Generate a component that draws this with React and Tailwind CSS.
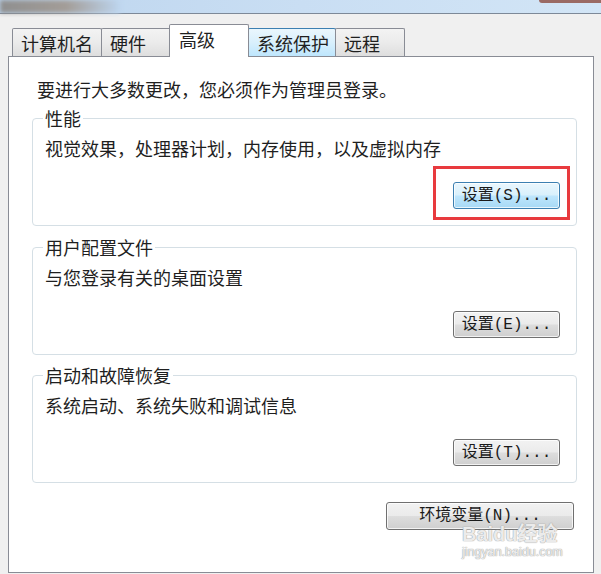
import React from "react";

const cjk = "font-['Noto_Sans_CJK_SC','Liberation_Sans',sans-serif]";

const WinButton = ({ label, focused = false, className = "" }) => (
  <button
    className={`flex items-center justify-center rounded-[3px] border text-[16px] leading-none text-[#1a1a1a] font-['Liberation_Mono','Noto_Sans_CJK_SC',monospace] shadow-[inset_0_0_0_1px_rgba(255,255,255,0.75)] ${
      focused
        ? "border-[#3c7fb1] bg-[linear-gradient(#eaf6fd,#d9f0fc_48%,#bee6fd_52%,#a7d9f5)]"
        : "border-[#707070] bg-[linear-gradient(#f2f2f2,#ebebeb_48%,#dddddd_52%,#cfcfcf)]"
    } ${className}`}
  >
    {label}
  </button>
);

const GroupBox = ({ title, text, button, focused, marked }) => (
  <div className="relative h-[108px] rounded-[4px] border border-[#d5dfe5] pl-[12px] pt-[17px]">
    <span className="absolute -top-[13px] left-[10px] bg-white px-[2px] text-[18px] leading-[24px]">
      {title}
    </span>
    <div className="text-[18px] leading-[24px]">{text}</div>
    <div className="mt-[22px] flex justify-end pr-[16px]">
      <WinButton label={button} focused={focused} className="h-[27px] w-[107px]" />
    </div>
    {marked && (
      <div className="absolute right-[6px] top-[47px] h-[54px] w-[137px] border-[3px] border-[#e83a3e]" />
    )}
  </div>
);

const tabs = [
  { label: "计算机名", w: "w-[90px]" },
  { label: "硬件", w: "w-[70px]" },
  { label: "高级", w: "w-[80px]", active: true },
  { label: "系统保护", w: "w-[88px]", hover: true },
  { label: "远程", w: "w-[70px]" },
];

export default function App() {
  return (
    <div className={`relative h-[574px] w-[601px] overflow-hidden bg-[#f0f0f0] text-[#1f1f1f] ${cjk}`}>
      {/* blurred title bar */}
      <div className="flex h-[14px] border-b border-[#7d8998] bg-[linear-gradient(90deg,#bdd5ee,#c9def3_50%,#d2e5f6)]">
        <div className="h-full w-[120px] bg-[linear-gradient(90deg,#8f8f8f,#a39d98_55%,#bdd5ee)] blur-[2px]" />
        <div className="flex-1" />
        <div className="h-[3px] w-[62px] rounded-bl-[3px] bg-[#9a6a64]" />
      </div>

      <div className="pl-[8px] pr-[7px] pt-[10px]">
        {/* tabs */}
        <div className="flex h-[32px] items-end pl-[4px]">
          {tabs.map((t) =>
            t.active ? (
              <div
                key={t.label}
                className={`relative z-10 -mb-px -ml-[2px] h-[33px] ${t.w} rounded-t-[2px] border border-b-0 border-[#898c95] bg-white pl-[9px] pt-[2px] text-[18px] leading-[24px]`}
              >
                {t.label}
              </div>
            ) : (
              <div
                key={t.label}
                className={`-ml-px h-[28px] first:ml-0 ${t.w} rounded-t-[2px] border border-b-0 ${
                  t.hover
                    ? "border-[#3c7fb1] bg-[linear-gradient(#eaf6fd,#d9f0fc_50%,#bee6fd)]"
                    : "border-[#898c95] bg-[linear-gradient(#f3f3f3,#ebebeb_50%,#dedede)]"
                } pl-[8px] pt-[2px] text-[18px] leading-[24px]`}
              >
                {t.label}
              </div>
            )
          )}
        </div>

        {/* panel */}
        <div className="h-[517px] border border-[#898c95] bg-white pl-[23px] pr-[16px] pt-[20px]">
          <div className="pl-[5px] text-[18px] leading-[24px]">
            要进行大多数更改，您必须作为管理员登录。
          </div>
          <div className="mt-[17px]">
            <GroupBox
              title="性能"
              text="视觉效果，处理器计划，内存使用，以及虚拟内存"
              button="设置(S)..."
              focused
              marked
            />
          </div>
          <div className="mt-[21px]">
            <GroupBox title="用户配置文件" text="与您登录有关的桌面设置" button="设置(E)..." />
          </div>
          <div className="mt-[20px]">
            <GroupBox title="启动和故障恢复" text="系统启动、系统失败和调试信息" button="设置(T)..." />
          </div>
          <div className="mt-[19px] flex justify-end pr-[3px]">
            <WinButton label="环境变量(N)..." className="h-[28px] w-[188px]" />
          </div>
        </div>
      </div>

      {/* watermark */}
      <div className="pointer-events-none absolute left-[462px] top-[524px] flex flex-col leading-none text-white/80 [text-shadow:0_0_1px_#9a9a9a,0_0_1px_#9a9a9a]">
        <span className="text-[20px] font-bold font-['Liberation_Sans','Noto_Sans_CJK_SC',sans-serif]">Baidu经验</span>
        <span className="mt-[2px] text-[12.5px] font-['Liberation_Sans',sans-serif]">jingyan.baidu.com</span>
      </div>
    </div>
  );
}
